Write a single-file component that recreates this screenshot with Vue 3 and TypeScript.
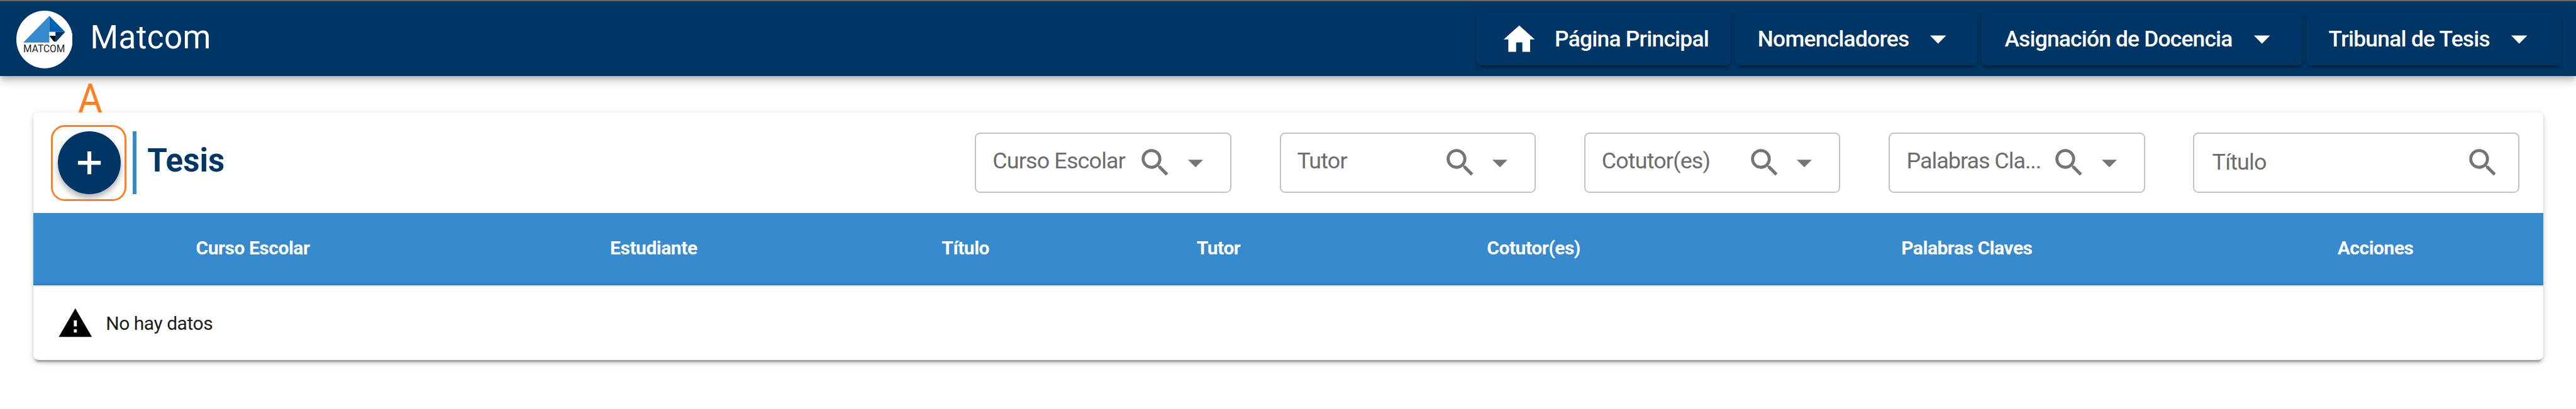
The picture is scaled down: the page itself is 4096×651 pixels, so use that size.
<script setup lang="ts">
interface MenuItem { label: string; home?: boolean; cls: string }
interface Filter { label: string; select: boolean; cls: string }

const menu: MenuItem[] = [
  { label: 'Página Principal', home: true, cls: 'm-home' },
  { label: 'Nomencladores', cls: 'm-nom' },
  { label: 'Asignación de Docencia', cls: 'm-asig' },
  { label: 'Tribunal de Tesis', cls: 'm-trib' },
]
const filters: Filter[] = [
  { label: 'Curso Escolar', select: true, cls: 'f-curso' },
  { label: 'Tutor', select: true, cls: 'f-tutor' },
  { label: 'Cotutor(es)', select: true, cls: 'f-cotutor' },
  { label: 'Palabras Cla...', select: true, cls: 'f-palabras' },
  { label: 'Título', select: false, cls: 'f-titulo' },
]
const columns: string[] = ['Curso Escolar', 'Estudiante', 'Título', 'Tutor', 'Cotutor(es)', 'Palabras Claves', 'Acciones']
</script>

<template>
  <div class="page">
    <header class="bar">
      <svg class="logo" viewBox="0 0 130 133">
        <ellipse cx="65" cy="66.500" rx="65" ry="66.500" fill="#fff" />
        <path d="M76 12V73.500H16Z" fill="#3689cd" />
        <path d="M76 12L112.500 49H76Z" fill="#0061b2" />
        <path d="M90 49H112.500L92 71.500H90Z" fill="#003666" />
        <path d="M76 49H90V58H76Z" fill="#f6f6f8" />
        <path d="M76 58H90V71.500H86.500Z" fill="#0c0c0c" />
        <text x="64" y="96" text-anchor="middle" textLength="96" lengthAdjust="spacingAndGlyphs" class="logo-text">MATCOM</text>
      </svg>
      <span class="brand">Matcom</span>
      <nav class="menu">
        <button v-for="m in menu" :key="m.label" class="menu-btn" :class="m.cls">
          <svg v-if="m.home" class="home" viewBox="0 0 24 24"><path d="M10,20V14H14V20H19V12H22L12,3L2,12H5V20H10Z" /></svg>
          <span class="menu-text">{{ m.label }}</span>
          <svg v-if="!m.home" class="caret" viewBox="0 0 24 24"><path d="M7,10L12,15L17,10H7Z" /></svg>
        </button>
      </nav>
    </header>

    <main class="card">
      <div class="tools">
        <button class="add"><svg viewBox="0 0 24 24"><path d="M19,13.200H13.200V19H10.800V13.200H5V10.800H10.800V5H13.200V10.800H19V13.200Z" /></svg></button>
        <i class="rule"></i>
        <h1 class="title">Tesis</h1>
        <div class="filters">
          <div v-for="f in filters" :key="f.label" class="field" :class="f.cls">
            <span class="label">{{ f.label }}</span>
            <svg class="search" viewBox="0 0 24 24"><path d="M9.5,3A6.5,6.5 0 0,1 16,9.5C16,11.11 15.41,12.59 14.44,13.73L14.71,14H15.5L20.5,19L19,20.5L14,15.5V14.71L13.73,14.44C12.59,15.41 11.11,16 9.5,16A6.5,6.5 0 0,1 3,9.5A6.5,6.5 0 0,1 9.5,3M9.5,5C7,5 5,7 5,9.5C5,12 7,14 9.5,14C12,14 14,12 14,9.5C14,7 12,5 9.5,5Z" /></svg>
            <svg v-if="f.select" class="drop" viewBox="0 0 24 24"><path d="M7,10L12,15L17,10H7Z" /></svg>
          </div>
        </div>
      </div>
      <div class="head">
        <div v-for="c in columns" :key="c">{{ c }}</div>
      </div>
      <div class="empty">
        <svg viewBox="0 0 24 24"><path d="M13,14H11V10H13M13,18H11V16H13M1,21H23L12,2L1,21Z" /></svg>
        <span>No hay datos</span>
      </div>
    </main>

    <span class="mark-letter">A</span>
    <span class="mark-box"></span>
  </div>
</template>

<style>
html { font-size: 69.0143px; }
body { background: #fefefe; overflow: hidden; }
</style>

<style scoped>
.page { position: relative; width: 59.35rem; height: 9.43rem; overflow: hidden; background: #fefefe; font-family: Roboto, "Liberation Sans", sans-serif; white-space: nowrap; }
button { border: 0; padding: 0; margin: 0; font: inherit; color: inherit; background: none; }
svg { display: block; flex: none; fill: currentColor; }

.bar { display: flex; align-items: center; box-sizing: border-box; height: 1.76rem; border-top: 0.03rem solid #666; padding: 0 0.34rem 0 0.37rem; background: #003666; color: #fff; box-shadow: 0 0.06rem 0.12rem -0.03rem rgba(0,0,0,.2), 0 0.12rem 0.15rem rgba(0,0,0,.14), 0 0.03rem 0.3rem rgba(0,0,0,.12); }
.logo { width: 1.3rem; height: 1.33rem; margin-top: 0.04rem; }
.logo-text { font: 400 25px Roboto, sans-serif; fill: #1c1c1c; }
.brand { margin-left: 0.41rem; padding-bottom: 0.07rem; font-size: 0.74rem; line-height: 1; letter-spacing: 0.008em; }
.menu { display: flex; margin-left: auto; gap: 0.1rem; }
.menu-btn { display: flex; align-items: center; box-sizing: border-box; height: 1.23rem; border-radius: 0.12rem; font-size: 0.512rem; font-weight: 500; line-height: 1; letter-spacing: -0.0105rem; box-shadow: 0 0.09rem 0.03rem -0.06rem rgba(0,0,0,.2), 0 0.06rem 0.06rem rgba(0,0,0,.14), 0 0.03rem 0.15rem rgba(0,0,0,.12); }
.menu-text { padding-top: 0.02rem; }
.home { width: 0.86rem; height: 0.86rem; margin: 0.03rem 0.385rem 0 0.555rem; }
.caret { width: 0.89rem; height: 0.89rem; margin-left: auto; margin-right: 0.45rem; }
.m-home { width: 5.86rem; letter-spacing: -0.011rem; }
.m-nom { width: 5.57rem; padding-left: 0.515rem; }
.m-asig { width: 7.4rem; padding-left: 0.535rem; letter-spacing: -0.0115rem; }
.m-trib { width: 5.86rem; padding-left: 0.5rem; }
.m-trib .caret { margin-right: 0.52rem; }
.m-asig .caret { margin-right: 0.49rem; }

.card { margin: 0.84rem 0.75rem 0 0.77rem; height: 5.71rem; border-radius: 0.12rem; background: #fff; box-shadow: 0 0.09rem 0.03rem -0.06rem rgba(0,0,0,.2), 0 0.06rem 0.06rem rgba(0,0,0,.14), 0 0.03rem 0.15rem rgba(0,0,0,.12); }
.tools { display: flex; align-items: center; box-sizing: border-box; height: 2.31rem; padding: 0 0.56rem; }
.add { display: grid; place-items: center; flex: none; width: 1.45rem; height: 1.45rem; border-radius: 50%; background: #003666; color: #fff; box-shadow: 0 0.09rem 0.15rem -0.03rem rgba(0,0,0,.2), 0 0.09rem 0.12rem rgba(0,0,0,.12), 0 0.03rem 0.3rem rgba(0,0,0,.08); }
.add svg { width: 0.9rem; height: 0.9rem; }
.rule { width: 0.09rem; height: 1.45rem; margin-left: 0.28rem; background: #3689cd; }
.title { margin: 0 0 0 0.245rem; padding-bottom: 0.09rem; font-size: 0.74rem; font-weight: 700; line-height: 1; color: #003666; }
.filters { display: flex; margin-left: auto; gap: 1.11rem; }
.field { display: flex; align-items: center; box-sizing: border-box; width: 5.907rem; height: 1.387rem; padding-left: 0.375rem; border: 0.03rem solid #c2c2c2; border-radius: 0.12rem; font-size: 0.52rem; line-height: 1; letter-spacing: -0.012rem; color: #6c6c6c; }
.label { padding-bottom: 0.06rem; }
.search { width: 0.84rem; height: 0.84rem; margin-left: auto; color: #757575; }
.drop { width: 0.84rem; height: 0.84rem; margin-right: 0.38rem; color: #757575; }
.field .search { margin-right: 0.08rem; }
.f-palabras { letter-spacing: -0.0145rem; padding-left: 0.385rem; }
.f-titulo { width: 7.51rem; padding-left: 0.41rem; }
.f-titulo .label { padding-bottom: 0; }
.f-titulo .search { margin-right: 0.38rem; }

.head { display: grid; grid-template-columns: 10.11rem 8.36rem 6.01rem 5.65rem 8.87rem 11.09rem 7.74rem; box-sizing: border-box; height: 1.7rem; border-bottom: 0.03rem solid #e0e0e0; background: #368acd; box-shadow: inset 0 -0.03rem #2e79b6; color: #fff; font-size: 0.435rem; font-weight: 700; line-height: 1; letter-spacing: -0.007rem; }
.head div { display: flex; align-items: center; justify-content: center; padding-bottom: 0.05rem; }
.empty { display: flex; align-items: center; height: 1.7rem; padding-left: 0.555rem; font-size: 0.435rem; line-height: 1; letter-spacing: -0.007rem; color: #000; }
.empty svg { width: 0.834rem; height: 0.834rem; margin-right: 0.28rem; }
.empty span { color: #1c1c1c; }

.mark-letter { position: absolute; left: 1.79rem; top: 1.807rem; font-size: 0.93rem; line-height: 1; color: #ff7f27; transform: scaleX(.93); transform-origin: left; }
.mark-box { position: absolute; left: 1.18rem; top: 2.89rem; box-sizing: border-box; width: 1.735rem; height: 1.74rem; border: 0.045rem solid #ff7f27; border-radius: 0.32rem; }
</style>
